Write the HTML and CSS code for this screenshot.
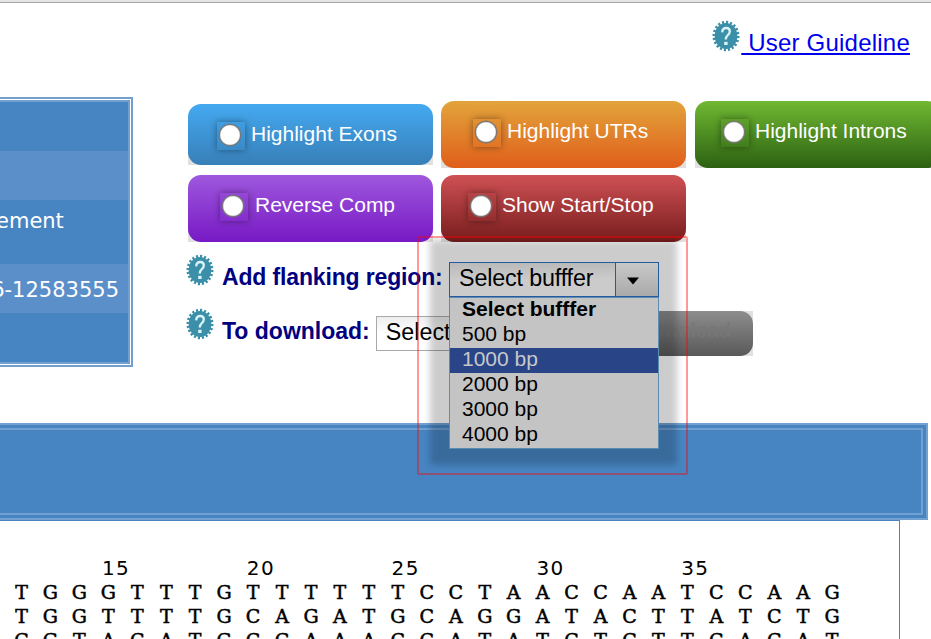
FILE: index.html
```html
<!DOCTYPE html>
<html lang="en">
<head>
<meta charset="utf-8">
<title>Sequence viewer</title>
<link rel="stylesheet" href="styles.css">
</head>
<body>
<svg width="0" height="0" class="defs">
  <symbol id="help" viewBox="0 0 28 32">
    <ellipse cx="14" cy="16" rx="11.3" ry="13" fill="#3b8fa8"/>
    <ellipse cx="14" cy="16" rx="11.8" ry="13.5" fill="none" stroke="#3b8fa8" stroke-width="3.4" pathLength="80" stroke-dasharray="2.1 1.9"/>
    <path d="M10.2 12.4 Q10.4 8 14.2 8 Q17.8 8 17.8 11.4 Q17.8 13.6 15.6 15.3 Q13.8 16.8 13.8 19.6" fill="none" stroke="#d9f5f8" stroke-width="2.3"/>
    <rect x="12.2" y="21.8" width="3.4" height="3.2" fill="#d9f5f8"/>
  </symbol>
</svg>
<div class="topline"></div>
<header class="header">
  <svg class="help"><use href="#help"/></svg><a class="guide" href="#">&nbsp;User Guideline</a>
</header>
<main class="main">
  <section class="info">
    <div class="row r1"></div>
    <div class="row r2 alt"></div>
    <div class="row r3">ement</div>
    <div class="row r4 alt">6-12583555</div>
    <div class="row r5"></div>
  </section>
  <section class="controls">
    <div class="buttons first">
      <div class="btn exons"><i class="radio"></i><span>Highlight Exons</span></div>
      <div class="btn utrs"><i class="radio"></i><span>Highlight UTRs</span></div>
      <div class="btn introns"><i class="radio"></i><span>Highlight Introns</span></div>
    </div>
    <div class="buttons second">
      <div class="btn reverse"><i class="radio"></i><span>Reverse Comp</span></div>
      <div class="btn startstop"><i class="radio"></i><span>Show Start/Stop</span></div>
    </div>
    <div class="field flank">
      <svg class="help"><use href="#help"/></svg><span class="label">Add flanking region:</span>
    </div>
    <div class="field down">
      <svg class="help"><use href="#help"/></svg><span class="label">To download:</span>
      <div class="format">Select</div>
      <div class="download"><span>Download</span></div>
    </div>
  </section>
</main>
<section class="banner"><div class="banner-in"></div></section>
<section class="seq">
  <div class="nums"><span>15</span><span>20</span><span>25</span><span>30</span><span>35</span></div>
  <div class="bases" id="bases"></div>
</section>
<div class="marker"><div class="shade"></div></div>
<div class="buffer">
  <div class="select"><span class="value">Select bufffer</span><span class="arrow"><svg width="14" height="8"><path d="M1 0.5H13L7 7.5Z"/></svg></span></div>
  <div class="list">
    <div class="opt title">Select bufffer</div>
    <div class="opt">500 bp</div>
    <div class="opt on">1000 bp</div>
    <div class="opt">2000 bp</div>
    <div class="opt">3000 bp</div>
    <div class="opt">4000 bp</div>
  </div>
</div>
<script src="script.js"></script>
</body>
</html>
```
FILE: styles.css
```css
* { box-sizing: border-box; }
body { margin: 0; width: 931px; height: 639px; overflow: hidden; position: relative; background: #fff; font-family: "Liberation Sans", Arial, sans-serif; }
.defs { display: none; }
.topline { height: 3px; background: #e4e4e4; border-bottom: 1px solid #a5a5a5; }
.help { width: 28px; height: 32px; flex: none; }
.header { height: 94px; padding: 17px 21px 0 0; display: flex; justify-content: flex-end; align-items: flex-start; }
.guide { color: #0000ee; font-size: 24px; line-height: 28px; margin: 9px 0 0 1px; letter-spacing: 0.22px; text-decoration-thickness: 2px; text-underline-offset: 2px; white-space: nowrap; }
.main { display: flex; height: 326px; }
.info { width: 133px; height: 270px; flex: none; border: 2px solid #72a1d1; border-left: 0; padding: 1px 1px 1px 0; background: #fff; color: #fff; font-family: "DejaVu Sans", sans-serif; font-size: 21px; }
.row { background: #4785c2; border-right: 2px solid #72a1d1; display: flex; align-items: center; white-space: nowrap; }
.r1 { height: 51px; border-top: 2px solid #72a1d1; }
.r2 { height: 49px; }
.r3 { height: 64px; align-items: flex-start; padding-top: 9px; text-indent: -4px; }
.r4 { height: 49px; justify-content: flex-end; padding: 2px 9px 0 0; }
.r5 { height: 51px; border-bottom: 2px solid #72a1d1; }
.alt { background: #5b8fc9; }
.controls { margin-left: 55px; padding-top: 4px; flex: none; }
.buttons { display: flex; gap: 8px; }
.first { align-items: flex-start; height: 67px; }
.second { margin-top: 7px; }
.btn { position: relative; width: 245px; height: 67px; border-radius: 13px; display: flex; align-items: flex-start; color: #fff; font-size: 21px; line-height: 24px; white-space: nowrap; }
.btn::before { content: ""; position: absolute; z-index: -1; inset: 50% 0 0 0; background: #e0e0e0; }
.btn span { margin: 18px 0 0 6px; }
.radio { width: 28px; height: 28px; margin: 18px 0 0 29px; flex: none; box-shadow: 0 0 7px rgba(0,0,0,.4); background: radial-gradient(circle at 13px 13px, #fff 0 9.2px, #777 10.5px, transparent 12px); }
.exons { height: 61px; margin-top: 3px; background: linear-gradient(#44a9f0, #377fb8); }
.utrs { background: linear-gradient(#e2a43b, #e05e1b); }
.introns { background: linear-gradient(#70b832, #2c6112); margin-left: 1px; }
.reverse { background: linear-gradient(#9f58dd, #7719c4); }
.startstop { background: linear-gradient(#cf5154, #771c1d); }
.utrs .radio { margin-left: 32px; }
.introns .radio { margin-left: 26px; }
.reverse .radio { margin-left: 32px; }
.reverse span { margin-left: 7px; }
.startstop .radio { margin-left: 27px; }
.field { display: flex; align-items: flex-start; height: 54px; margin-left: -2px; }
.flank { margin-top: 12px; }
.label { font-weight: bold; font-size: 23px; line-height: 28px; color: #000080; margin: 9px 0 0 8px; white-space: nowrap; letter-spacing: -.15px; }
.down .label { letter-spacing: 0; }
.format { width: 160px; height: 35px; margin: 8px 0 0 6px; border: 1px solid #aaa; font-size: 23.3px; line-height: 31px; padding-left: 9px; background: linear-gradient(#eee, #fff 50%); }
.download { position: relative; width: 217px; height: 45px; margin: 3px 0 0 0; border-radius: 13px; background: linear-gradient(#8d8d8d, #595959); color: #777; font-size: 21px; line-height: 38px; text-align: right; padding-right: 22px; }
.download::before { content: ""; position: absolute; z-index: -1; inset: 0; background: #e0e0e0; }
.banner { width: 928px; height: 97px; border: 2px solid #72a1d1; border-left: 0; padding: 3px 3px 3px 0; background: #4785c2; }
.banner-in { height: 87px; border: 2px solid #72a1d1; border-left: 0; }
.seq { width: 900px; height: 125px; border: 1px solid #4785c2; border-left: 0; color: #000; padding-top: 35px; }
.nums { display: grid; grid-template-columns: repeat(5, 144.8px); margin-left: 102px; height: 24px; font: 20px/24px "DejaVu Sans", sans-serif; letter-spacing: 1.4px; }
.bases { display: grid; grid-template-columns: repeat(29, 28.96px); grid-auto-rows: 24px; margin-left: 7px; text-align: center; font: 19px/24px "DejaVu Serif", serif; }
.bases span { -webkit-text-stroke: .5px #000; }
.marker { position: absolute; left: 417px; top: 236px; width: 271px; height: 239px; border: 2px solid rgba(255,0,0,.4); border-radius: 2px; overflow: hidden; }
.shade { position: absolute; inset: 2px 9px 8px 11px; background: rgba(0,0,0,.2); filter: blur(3.5px); }
.buffer { position: absolute; left: 449px; top: 262px; width: 210px; }
.select { height: 35px; display: flex; border: 1px solid #2559a0; background: linear-gradient(#bababa, #cbcbcb 50%); font-size: 23.3px; line-height: 31px; }
.value { width: 165px; padding-left: 9px; white-space: nowrap; letter-spacing: -.15px; }
.arrow { flex: 1; display: flex; align-items: center; padding: 2px 0 0 10px; border-left: 1px solid #2559a0; background: linear-gradient(#c8c8c8, #aaa); }
.list { border: 1px solid #5c8caf; background: #c4c4c4; height: 152px; }
.opt { height: 25px; font-size: 21px; line-height: 22px; padding-left: 12px; white-space: nowrap; }
.title { font-weight: bold; }
.on { background: #294588; color: #c8c8c8; }
```
FILE: script.js
```js
const rows = [
  "TGGGTTTGTTTTTTCCTAACCAATCCAAG",
  "TGGTTTTGCAGATGCAGGATACTTATCTG",
  "CGTACATGCCAAACCATATCTCTTCACAT"
];
const grid = document.getElementById("bases");
for (const base of rows.join("")) {
  const cell = document.createElement("span");
  cell.textContent = base;
  grid.appendChild(cell);
}
```
